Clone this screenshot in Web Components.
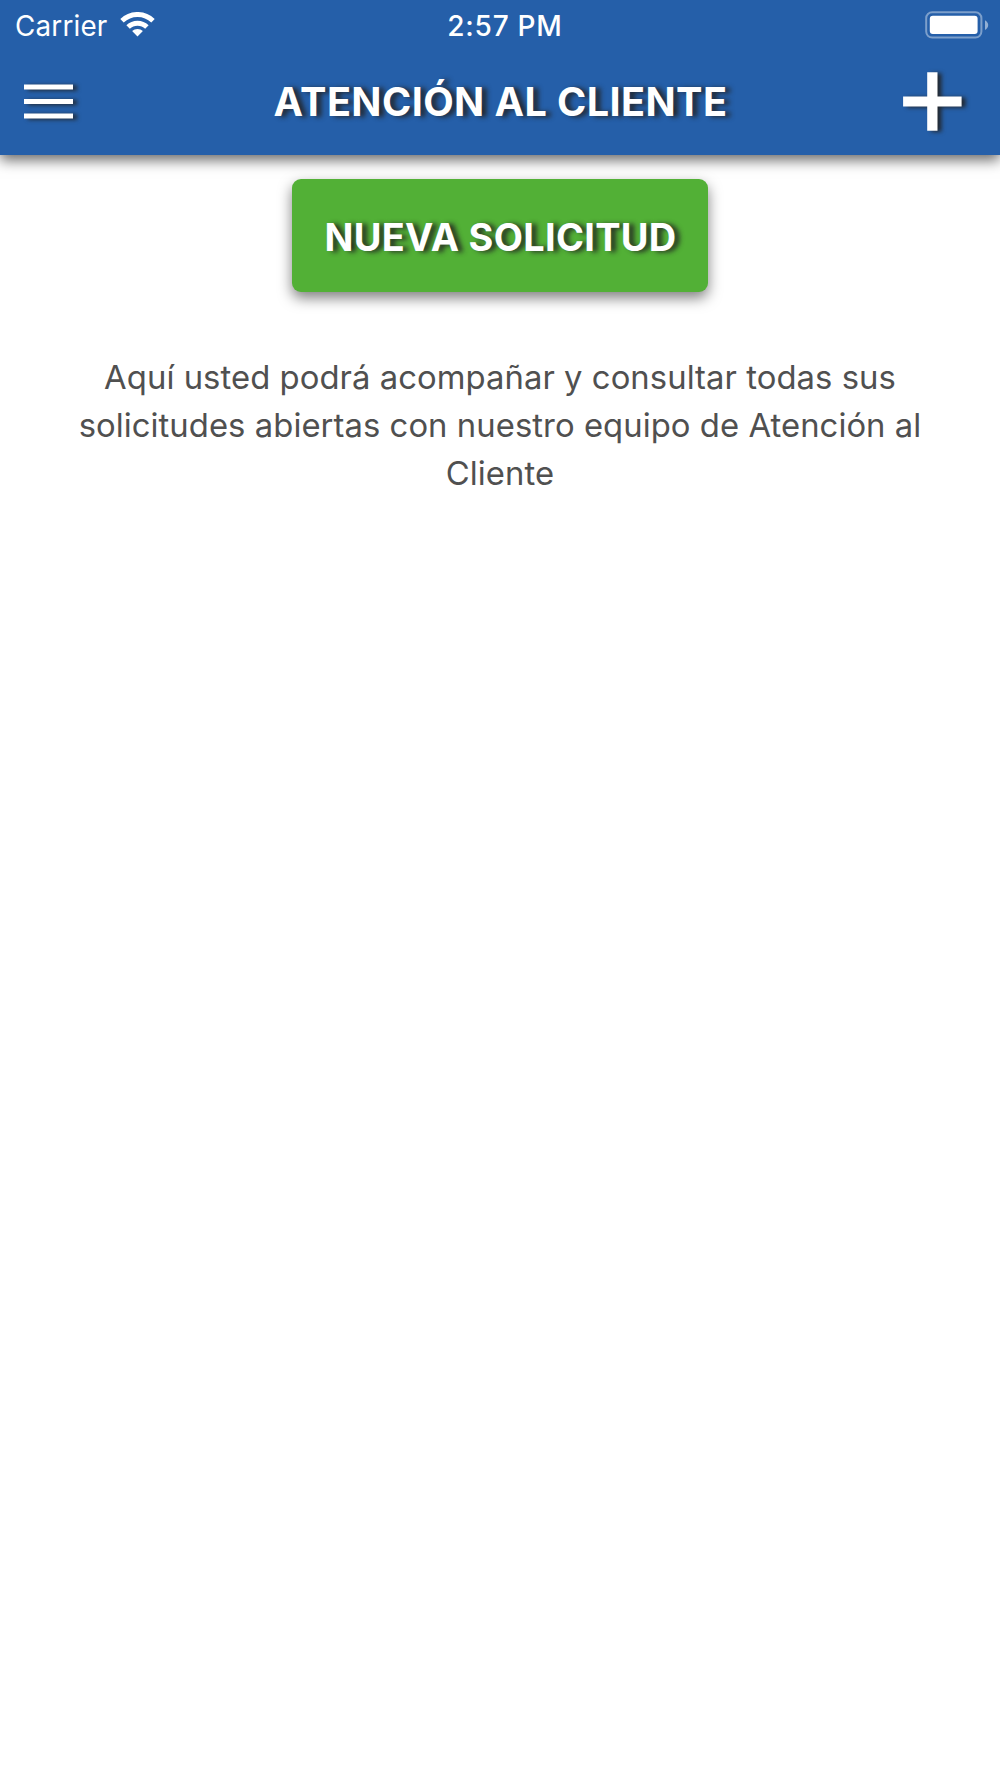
<!DOCTYPE html>
<html lang="es">
<head>
<meta charset="utf-8">
<title>Atención al cliente</title>
<style>
body {
	margin: 0;
	min-height: 1778px;
	background: #fff;
	font-family: Inter, "Liberation Sans", sans-serif;
	--primary: #255fa9;
	--action: #52b036;
	--text: #505050;
	--glyph-shadow: rgba(34, 34, 34, .9);
}
</style>
</head>
<body>
<support-page>
	<app-header slot="header">
		<status-bar slot="status" carrier="Carrier" time="2:57 PM"></status-bar>
		ATENCIÓN AL CLIENTE
	</app-header>
	<action-button>NUEVA SOLICITUD</action-button>
	<intro-text>Aquí usted podrá acompañar y consultar todas sus solicitudes abiertas con nuestro equipo de Atención al Cliente</intro-text>
</support-page>

<script>
const createTemplate = (html) => {
	const template = document.createElement('template');
	template.innerHTML = html;
	return template;
};

class BaseElement extends HTMLElement {
	constructor() {
		super();

		this.attachShadow({ mode: 'open' });
		this.shadowRoot.appendChild(this.constructor.template.content.cloneNode(true));
	}
}

class SupportPage extends BaseElement {
	static template = createTemplate(`
<style>
:host {
	display: flex;
	flex-direction: column;
	min-height: 1778px;
	overflow: hidden;
}

main {
	display: flex;
	flex-direction: column;
	align-items: center;
	gap: 61px;
	padding: 24px 60px;
}
</style>
<slot name="header"></slot>
<main><slot></slot></main>
`);
}

class StatusBar extends BaseElement {
	static template = createTemplate(`
<style>
:host {
	display: grid;
	grid-template-columns: 1fr auto 1fr;
	align-items: center;
	height: 50px;
	padding: 0 11px 0 15px;
	color: #fff;
	font-size: 28px;
	line-height: 50px;
}

.network {
	display: flex;
	align-items: center;
	gap: 12px;
}

.carrier {
	padding-top: 1px;
	font-size: 27.8px;
	letter-spacing: 0.2px;
}

.time {
	margin-left: 6px;
	padding-top: 1px;
	font-weight: 500;
	letter-spacing: 0.75px;
}

svg {
	display: block;
}

.wifi {
	margin-bottom: 2px;
}

.battery {
	justify-self: end;
	margin-bottom: 2px;
}
</style>
<div class="network">
	<span class="carrier"></span>
	<svg class="wifi" width="35" height="25" viewBox="0 0 35 25" fill="none" stroke="#fff" stroke-width="4.9">
		<path d="M2 8.7a22.3 22.3 0 0 1 31 0"/>
		<path d="M8.1 15.1a13.4 13.4 0 0 1 18.8 0"/>
		<path d="M17.5 24.5l-5.4-5.4a7.8 7.8 0 0 1 10.8 0z" fill="#fff" stroke="none"/>
	</svg>
</div>
<span class="time"></span>
<svg class="battery" width="64" height="28" viewBox="0 0 64 28">
	<rect x="1.2" y="1.2" width="55.2" height="25.4" rx="6" fill="none" stroke="#fff" stroke-opacity=".4" stroke-width="2"/>
	<rect x="4.8" y="4.8" width="47.8" height="18.3" rx="3" fill="#fff"/>
	<path d="M60 9.2q3.2 1.8 3.2 4.9t-3.2 4.9z" fill="#fff" fill-opacity=".5"/>
</svg>
`);

	static get observedAttributes() {
		return ['carrier', 'time'];
	}

	attributeChangedCallback(attrName, oldValue, newValue) {
		if (oldValue !== newValue) {
			this.shadowRoot.querySelector('.' + attrName).textContent = newValue;
		}
	}
}

class AppHeader extends BaseElement {
	static template = createTemplate(`
<style>
:host {
	display: block;
	height: 155px;
	background: var(--primary);
	color: #fff;
	box-shadow: 0 5px 13px rgba(0, 0, 0, .6);
}

.toolbar {
	display: grid;
	grid-template-columns: 100px 1fr 100px;
	align-items: center;
	height: 105px;
}

h1 {
	margin: 0 0 2px 1px;
	font-size: 39.6px;
	font-weight: 700;
	letter-spacing: 0.42px;
	line-height: 48px;
	text-align: center;
	white-space: nowrap;
	text-shadow: 5px 1px 5px var(--glyph-shadow);
}

svg {
	display: block;
	filter: drop-shadow(4px 1px 2px var(--glyph-shadow));
}
</style>
<slot name="status"></slot>
<div class="toolbar">
	<svg width="100" height="105" viewBox="0 50 100 105" fill="#fff">
		<path d="M24 84.4h49v5.2H24zM24 98.9h49v5.2H24zM24 113.4h49v5.2H24z"/>
	</svg>
	<h1><slot></slot></h1>
	<svg width="100" height="105" viewBox="900 50 100 105" fill="#fff">
		<path d="M927.2 72.2h10.3v24.3h24.1v10h-24.1v24.3h-10.3v-24.3h-24.1v-10h24.1z"/>
	</svg>
</div>
`);
}

class ActionButton extends BaseElement {
	static template = createTemplate(`
<style>
:host {
	display: block;
}

button {
	display: block;
	width: 416px;
	height: 113px;
	margin: 0;
	padding: 2px 0 0 1px;
	border: 0;
	border-radius: 9px;
	background: var(--action);
	color: #fff;
	font: 700 37.9px/50px Inter, "Liberation Sans", sans-serif;
	letter-spacing: 0.32px;
	white-space: nowrap;
	text-shadow: 5px 1px 5px var(--glyph-shadow);
	box-shadow: 0 6px 14px rgba(0, 0, 0, .5);
}
</style>
<button type="button"><slot></slot></button>
`);
}

class IntroText extends BaseElement {
	static template = createTemplate(`
<style>
:host {
	display: block;
}

p {
	margin: 0;
	color: var(--text);
	font-size: 32.8px;
	letter-spacing: 0.06px;
	line-height: 48.2px;
	text-align: center;
}
</style>
<p><slot></slot></p>
`);
}

window.customElements.define('status-bar', StatusBar);
window.customElements.define('app-header', AppHeader);
window.customElements.define('action-button', ActionButton);
window.customElements.define('intro-text', IntroText);
window.customElements.define('support-page', SupportPage);
</script>
</body>
</html>
